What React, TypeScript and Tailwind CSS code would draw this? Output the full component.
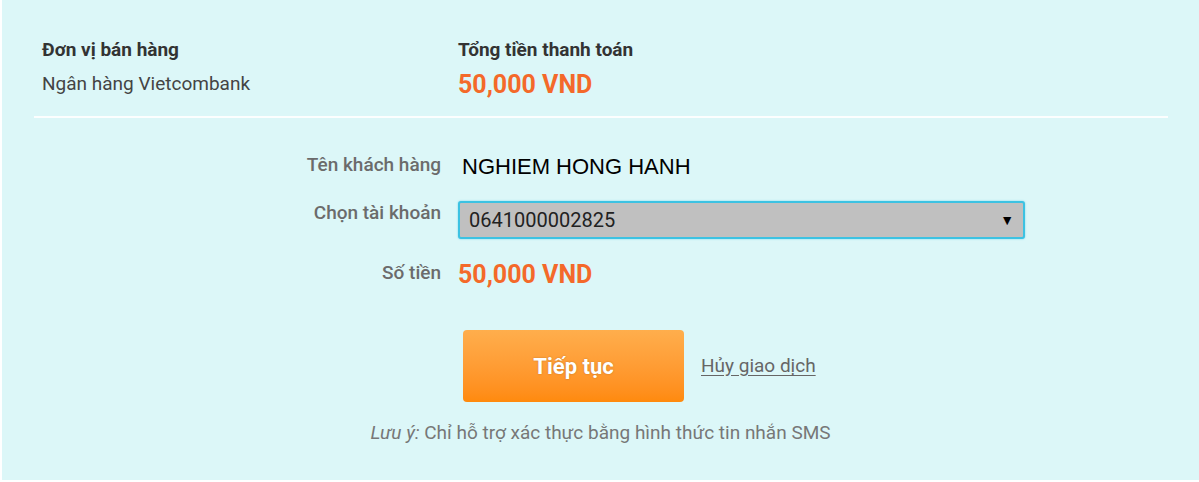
import React from "react";

const orange = "text-[#f4692a]";
const label = "w-[439px] shrink-0 text-right text-[19px] leading-[24px] font-medium text-[#6b6b6b]";

const PaymentConfirm = () => {
  return (
    <div className="w-[1199px] h-[482px] bg-white font-['Roboto',sans-serif]">
      <div className="ml-[2px] w-[1197px] h-[480px] bg-[#dcf7f8] flex flex-col">
        {/* merchant + total */}
        <div className="flex pt-[38px] pl-[40px] h-[116px]">
          <div className="w-[416px]">
            <div className="text-[19px] leading-[24px] font-bold text-[#333]">Đơn vị bán hàng</div>
            <div className="text-[19px] leading-[24px] mt-[10px] text-[#444]">Ngân hàng Vietcombank</div>
          </div>
          <div>
            <div className="text-[19px] leading-[24px] font-bold text-[#333]">Tổng tiền thanh toán</div>
            <div className={`text-[25px] leading-[30px] font-bold mt-[8px] ${orange}`}>50,000 VND</div>
          </div>
        </div>
        <div className="ml-[32px] mr-[31px] h-[2px] bg-white/90" />

        {/* form */}
        <div className="flex mt-[34px] gap-x-[17px]">
          <div className={`${label} pt-[1px]`}>Tên khách hàng</div>
          <div className="pl-[4px] text-[22px] leading-[30px] text-black font-['Liberation_Sans',sans-serif]">
            NGHIEM HONG HANH
          </div>
        </div>

        <div className="flex items-start mt-[19px] gap-x-[17px]">
          <div className={label}>Chọn tài khoản</div>
          <div className="w-[567px] h-[38px] rounded-[3px] border-2 border-[#3cc2e2] bg-[#c0c0c0] flex items-center justify-between pl-[9px] pr-[9px] shadow-[0_0_2px_#6fd3ea]">
            <span className="text-[20px] text-[#222]">0641000002825</span>
            <span className="text-[14px] text-black">▼</span>
          </div>
        </div>

        <div className="flex items-start mt-[20px] gap-x-[17px]">
          <div className={`${label} pt-[2px]`}>Số tiền</div>
          <div className={`text-[25px] leading-[32px] font-bold ${orange}`}>50,000 VND</div>
        </div>

        {/* actions */}
        <div className="flex items-center mt-[39px] ml-[461px]">
          <button className="w-[221px] h-[72px] rounded-[4px] bg-gradient-to-b from-[#ffae4c] to-[#ff8a0c] text-white text-[22px] font-bold [text-shadow:0_0_2px_rgba(0,0,0,0.25)]">
            Tiếp tục
          </button>
          <a href="#" className="ml-[17px] text-[19px] text-[#666] underline underline-offset-[3px]">
            Hủy giao dịch
          </a>
        </div>

        <div className="text-center text-[19px] leading-[24px] text-[#777] mt-[19px]">
          <i>Lưu ý:</i> Chỉ hỗ trợ xác thực bằng hình thức tin nhắn SMS
        </div>
      </div>
    </div>
  );
};

export default function App() {
  return <PaymentConfirm />;
}
